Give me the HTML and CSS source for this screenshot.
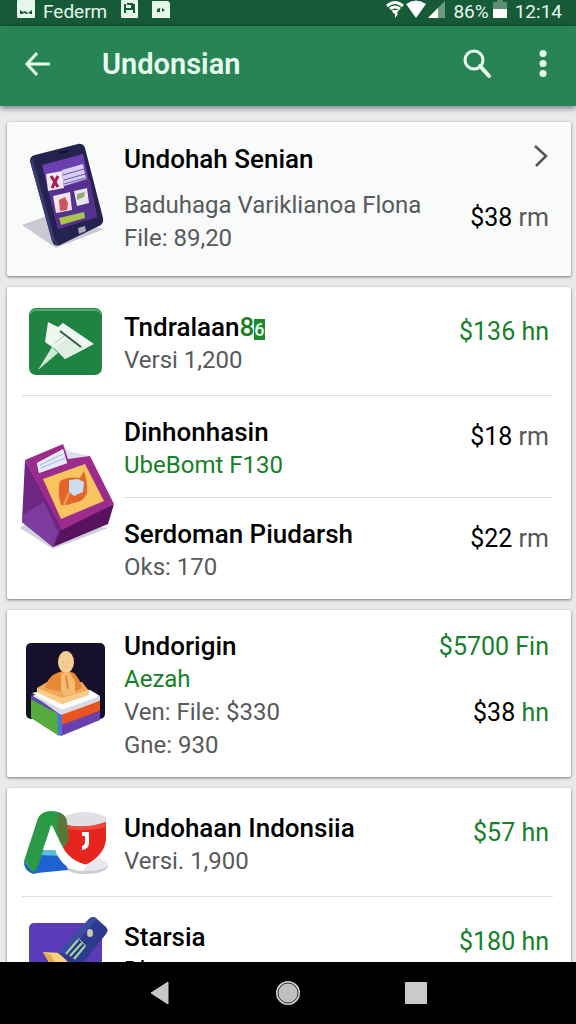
FILE: index.html
```html
<!DOCTYPE html>
<html lang="id">
<head>
  <meta charset="UTF-8">
  <meta name="viewport" content="width=device-width, initial-scale=1.0">
  <title>Undonsian</title>
  <link rel="stylesheet" href="styles.css">
</head>
<body>
  <div class="status-bar">
    <div class="status-left">
      <svg width="18" height="18" viewBox="0 0 18 18"><rect width="18" height="18" rx="1" fill="#e6f7ec"/><path d="M3 14v-4l3 2 2-1 3 2 4-3v4h-2l-1-1-2 1-3-1-2 1z" fill="#165a38"/></svg>
      <span class="carrier">Federm</span>
      <svg class="status-note" width="17" height="18" viewBox="0 0 17 18"><rect width="17" height="18" rx="1" fill="#e6f7ec"/><path d="M4 4v9M4 9h9M13 4v9M6 4h5v4" fill="none" stroke="#165a38" stroke-width="2"/></svg>
      <svg class="status-note" width="18" height="18" viewBox="0 0 18 18"><path d="M0 1h16l2 2v15H0z" fill="#e6f7ec"/><path d="M5 9l3-1v4H5zM10 8l3 2-3 2z" fill="#165a38"/></svg>
    </div>
    <div class="status-right">
      <svg width="18" height="18" viewBox="0 0 18 18"><path d="M1 6q8-7 16 0M4 9q5-4 10 0" fill="none" stroke="#fff" stroke-width="3"/><path d="M6 10h7l-2 3 1 1-3 4 0-4-2-1z" fill="#fff"/></svg>
      <svg width="20" height="18" viewBox="0 0 20 18"><path d="M0 4q10-7 20 0L10 18z" fill="#fff"/></svg>
      <svg width="17" height="18" viewBox="0 0 17 18"><path d="M17 1v17H0z" fill="#6d9c83"/><path d="M10 8v10H0z" fill="#fff"/></svg>
      <span class="battery-level">86%</span>
      <svg width="14" height="18" viewBox="0 0 14 18"><path d="M4 0h6v2h4v8H0V2h4z" fill="#5c8f74"/><path d="M0 9h14v9H0z" fill="#fff"/></svg>
      <span class="clock">12:14</span>
    </div>
  </div>

  <header class="app-bar">
    <button class="icon-button" type="button" aria-label="Back">
      <svg width="32" height="32" viewBox="0 0 32 32"><path d="M28 16H5M15 5L5 16l10 11" fill="none" stroke="#e9fff0" stroke-width="3"/></svg>
    </button>
    <h1 class="app-title">Undonsian</h1>
    <button class="icon-button" type="button" aria-label="Search">
      <svg width="32" height="32" viewBox="0 0 32 32"><circle cx="12" cy="12" r="9" fill="none" stroke="#e9fff0" stroke-width="3"/><path d="M18 18l9 10" stroke="#e9fff0" stroke-width="4" stroke-linecap="round"/></svg>
    </button>
    <button class="icon-button" type="button" aria-label="More options">
      <svg width="32" height="32" viewBox="0 0 32 32"><g fill="#e9fff0"><circle cx="16" cy="5.500" r="3.500"/><circle cx="16" cy="15.500" r="3.500"/><circle cx="16" cy="25.500" r="3.500"/></g></svg>
    </button>
  </header>

  <main class="list">
    <section class="card card-featured">
      <div class="row row-featured">
        <svg class="thumb" width="96" height="108" viewBox="0 0 96 108">
          <path d="M2 82l22-8 60 12-48 19z" fill="#c9c9d4"/>
          <path d="M10 18q0-5 5-6L58 1q5-1 7 4l18 70q1 6-4 8L40 102q-6 2-8-4z" fill="#25224f"/>
          <path d="M15 15q-2 2-1 6l21 76 3 4q-4 0-6-4L10 18z" fill="#3b3a73"/>
          <path d="M22 22l41-11 14 63-39 12z" fill="#6a3fb0"/>
          <path d="M29 48l41-12 7 38-39 12z" fill="#56308f"/>
          <path d="M40 10l8-2" stroke="#111029" stroke-width="2"/>
          <path d="M26 31l16-3 2 17-16 3z" fill="#f4eaf6"/>
          <path d="M31 33l7 11M38 33l-6 12" stroke="#a51c59" stroke-width="3"/>
          <path d="M42 27l21-6 3 15-22 7z" fill="#d9cef3"/>
          <path d="M43 32l21-6M44 37l21-6M44 41l21-6" stroke="#6a55b0"/>
          <path d="M33 53l17-4 2 18-16 3z" fill="#f7e3ea"/>
          <path d="M39 57l6-3 3 6-1 7-7 1z" fill="#cf5262"/>
          <path d="M54 48l13-3 2 15-12 3z" fill="#e6e7f0"/>
          <path d="M57 51l8-2-1 5-7 3z" fill="#9da66d"/>
          <path d="M39 75l25-6 1 6-24 7z" fill="#a9c54b"/>
          <path d="M58 85l7-2 1 5-7 3z" fill="#a8a9b8"/>
        </svg>
        <div class="info">
          <h2 class="name">Undohah Senian</h2>
          <p class="detail">Baduhaga Variklianoa Flona</p>
          <p class="detail">File: 89,20</p>
        </div>
        <div class="meta">
          <svg class="chevron" width="16" height="26" viewBox="0 0 16 26"><path d="M2 3l11 10L3 23" fill="none" stroke="#555" stroke-width="2.500"/></svg>
          <p class="price">$38 <span class="unit">rm</span></p>
        </div>
      </div>
    </section>

    <section class="card">
      <div class="row">
        <svg class="thumb" width="96" height="66" viewBox="0 0 96 66">
          <rect x="9" y="-3" width="73" height="67" rx="7" fill="#218343"/>
          <path d="M10 4q0-6 6-6h59q6 0 6 6-2-4-6-4H16q-4 0-6 4z" fill="#5aa673"/>
          <path d="M32 36l6 6-20 17z" fill="#cfe9d4"/>
          <path d="M28 11l10 5 5-4 31 21-29 15-10-10-10-7z" fill="#eef8f0"/>
          <path d="M36 36l10-8 20 9-21 11z" fill="#dcefe1"/>
          <path d="M40 20l21 16" stroke="#2f5b43" stroke-width="2"/>
          <path d="M35 32l9-7" stroke="#a9cbb3"/>
        </svg>
        <div class="info">
          <h2 class="name">Tndralaan<span class="green">8</span><span class="tag">6</span></h2>
          <p class="detail">Versi 1,200</p>
        </div>
        <div class="meta">
          <p class="price green">$136 hn</p>
        </div>
      </div>
      <div class="row row-group">
        <svg class="thumb" width="96" height="108" viewBox="0 0 96 108">
          <path d="M0 84l10-8 78 8-55 21z" fill="#cfd0dc"/>
          <path d="M43 0l5 7 22 5-20 16z" fill="#dcdff0"/>
          <path d="M5 16L2 78l31 25 10-18z" fill="#6f2584"/>
          <path d="M4 70l20-12 14 30-5 15L2 78z" fill="#7d3ba0"/>
          <path d="M42 84l52-24-6 20-55 23z" fill="#591260"/>
          <path fill-rule="evenodd" d="M5 16L43 0l5 15 22-3 24 48-52 26zM17 19l2 10 28-10-4-14z" fill="#9c2c8b"/>
          <path d="M17 19l26-13 4 13-28 10z" fill="#e3e9f7"/>
          <path d="M20 21l23-11M21 24l24-10" stroke="#a9b8d8"/>
          <path d="M23 35l42-15 19 37-43 18z" fill="#f9c45f"/>
          <path d="M40 37q8-5 20-3l4-7q4 12 3 22-3 9-14 10-7 3-12 2-4-12-1-24z" fill="#e2662c"/>
          <path d="M49 36l9-1 6 3-1 10-9 4-5-4z" fill="#cddcec"/>
          <path d="M49 49l-5 12" stroke="#f2a157" stroke-width="2"/>
        </svg>
        <div class="subrows">
          <div class="subrow">
            <div class="info">
              <h2 class="name">Dinhonhasin</h2>
              <p class="detail green">UbeBomt F130</p>
            </div>
            <div class="meta">
              <p class="price">$18 <span class="unit">rm</span></p>
            </div>
          </div>
          <div class="subrow">
            <div class="info">
              <h2 class="name">Serdoman Piudarsh</h2>
              <p class="detail">Oks: 170</p>
            </div>
            <div class="meta">
              <p class="price">$22 <span class="unit">rm</span></p>
            </div>
          </div>
        </div>
      </div>
    </section>

    <section class="card">
      <div class="row row-tall">
        <svg class="thumb" width="96" height="108" viewBox="0 0 96 108">
          <rect x="6" y="1" width="79" height="76" rx="5" fill="#17102a"/>
          <path d="M12 54l30 18 38-15-10-8-28-6z" fill="#f2f0f6"/>
          <path d="M11 57l30 16-2 21-28-18z" fill="#56ad3d"/>
          <path d="M11 53l31 18v3L11 57z" fill="#5b4bb5"/>
          <path d="M12 52l30 16 38-14v5L42 74z" fill="#d9d9e6"/>
          <path d="M12 51l30 16 38-13-10-6-28-4z" fill="#fff"/>
          <path d="M41 73l39-14v10L41 84z" fill="#e8541f"/>
          <path d="M41 83l39-14v9L41 94z" fill="#6a3fae"/>
          <path d="M37 71l5 2v21l-4-1z" fill="#4b77d0"/>
          <path d="M17 46l10-6h35l7 9-1 4-26 9-25-12z" fill="#edaa5c"/>
          <path d="M17 46l25 10 27-8-1 5-26 9-25-12z" fill="#f9cb87"/>
          <path d="M37 31q8-4 17 0 6 6 8 15l-13 6-24-6q3-12 12-15z" fill="#e98835"/>
          <path d="M41 31h9l5 9v12l-9 2-5-5z" fill="#f6bb73"/>
          <path d="M46 34l2 13" stroke="#d88a42" stroke-width="2"/>
          <ellipse cx="46" cy="20" rx="8" ry="11" fill="#f5ce94"/>
          <path d="M42 20h2M48 20h2M45 25h3" stroke="#dba868"/>
        </svg>
        <div class="info">
          <h2 class="name">Undorigin</h2>
          <p class="detail green">Aezah</p>
          <p class="detail">Ven: File: $330</p>
          <p class="detail">Gne: 930</p>
        </div>
        <div class="meta meta-spread">
          <p class="price green">$5700 Fin</p>
          <p class="price">$38 <span class="green">hn</span></p>
        </div>
      </div>
    </section>

    <section class="card">
      <div class="row">
        <svg class="thumb" width="96" height="66" viewBox="0 0 96 66">
          <ellipse cx="66" cy="54" rx="22" ry="8" fill="#cdced4"/>
          <ellipse cx="66" cy="52" rx="22" ry="7" fill="#e9e9ed"/>
          <path d="M43 5q22-10 43 0v10H43z" fill="#dfe0e6"/>
          <path d="M43 12q20 6 43-2v18q-2 16-21 25-22-8-27-23z" fill="#e5261f"/>
          <path d="M43 12q20 6 43-2v5q-20 6-43 1z" fill="#f0473d"/>
          <path d="M18 40h22l8 18-31 3z" fill="#1d62d2"/>
          <path d="M19 38h22l2 6-25-1z" fill="#5bbfd6"/>
          <path d="M4 49L18 6q4-7 13-7 11 0 15 7l3 20-6 11-12-24-13 42q-2 5-5 4z" fill="#2b9a46"/>
          <path d="M4 49l9 10q4-1 5-6v8l-5 1q-10-4-9-13z" fill="#1e6fa8"/>
          <path d="M38 1q7 1 9 7l2 21-8 3-4-14z" fill="#77602f" opacity=".6"/>
          <path d="M32 13l-9 24 13-2 3 3q8 18 26 19-20 3-29-17z" fill="#fff"/>
          <path d="M32 13l9 19q8 17 26 21l-4 6q-19 0-27-19z" fill="#fff"/>
          <path d="M62 20h7v11q0 6-7 7v-4q3-1 3-4v-6h-3z" fill="#fff"/>
        </svg>
        <div class="info">
          <h2 class="name">Undohaan Indonsiia</h2>
          <p class="detail">Versi. 1,900</p>
        </div>
        <div class="meta">
          <p class="price green">$57 hn</p>
        </div>
      </div>
      <div class="row">
        <svg class="thumb" width="96" height="66" viewBox="0 0 96 66">
          <rect x="9" y="2" width="73" height="68" rx="5" fill="#5a3cba"/>
          <path d="M23 31l17 1 12 14-16 8z" fill="#f7d27a"/>
          <path d="M23 31l8 3 7 14-5-1z" fill="#e6a94c"/>
          <path d="M69-2q4-4 8 0l9 8q3 3 0 7L58 48 38 32z" fill="#2e3a8c"/>
          <path d="M69-2q4-4 8 0l-31 36-8-2z" fill="#3d4ba3"/>
          <path d="M46 33l12-14M50 35l12-13M54 38l11-13" stroke="#a8d69d" stroke-width="2"/>
          <path d="M58 17l8 8" stroke="#a8d69d"/>
          <ellipse cx="70" cy="12" rx="3" ry="4" fill="#c9c7b4"/>
        </svg>
        <div class="info">
          <h2 class="name">Starsia</h2>
          <p class="detail dark">Dk:</p>
        </div>
        <div class="meta">
          <p class="price green">$180 hn</p>
        </div>
      </div>
    </section>
  </main>

  <nav class="nav-bar">
    <button class="icon-button" type="button" aria-label="Back">
      <svg width="32" height="32" viewBox="0 0 32 32"><path d="M7 16L24 5v22z" fill="#c6c6c8" stroke="#c6c6c8" stroke-linejoin="round"/></svg>
    </button>
    <button class="icon-button" type="button" aria-label="Home">
      <svg width="32" height="32" viewBox="0 0 32 32"><circle cx="16" cy="16" r="12" fill="#cfcfd1"/><circle cx="16" cy="16" r="10" fill="#c0c0c2" stroke="#333"/></svg>
    </button>
    <button class="icon-button" type="button" aria-label="Recent apps">
      <svg width="32" height="32" viewBox="0 0 32 32"><rect x="5" y="5" width="22" height="22" rx="1" fill="#cbc9cc"/></svg>
    </button>
  </nav>
</body>
</html>
```

FILE: styles.css
```css
* {
  box-sizing: border-box;
}
body {
  margin: 0;
  height: 100vh;
  display: flex;
  flex-direction: column;
  font-family: Roboto, "Liberation Sans", sans-serif;
  background-color: #e9eaec;
  color: #000;
}
h1, h2, p {
  margin: 0;
}
svg {
  display: block;
  flex: none;
}
.icon-button {
  padding: 0;
  border: 0;
  background: none;
  cursor: pointer;
}

/* Status bar */
.status-bar {
  flex: none;
  display: flex;
  justify-content: space-between;
  height: 26px;
  padding: 0 14px 0 17px;
  background-color: #165a38;
  color: #e6f7ec;
  font-size: 19px;
  line-height: 23px;
}
.status-left,
.status-right {
  display: flex;
  align-items: flex-start;
}
.carrier {
  margin-left: 8px;
}
.status-note {
  margin-left: 14px;
}
.status-right {
  gap: 2px;
}
.battery-level {
  margin: 0 2px 0 6px;
}
.clock {
  margin-left: 6px;
}

/* App bar */
.app-bar {
  flex: none;
  display: flex;
  align-items: center;
  gap: 33px;
  height: 80px;
  padding: 0 17px 4px 22px;
  background-color: #298455;
  box-shadow: 0 2px 6px rgba(0, 0, 0, 0.5);
  z-index: 1;
}
.app-title {
  flex: 1;
  padding-left: 15px;
  color: #e9fff0;
  font-size: 29px;
  font-weight: 600;
  line-height: 36px;
}

/* Cards */
.list {
  flex: 1;
  min-height: 0;
  display: flex;
  flex-direction: column;
  gap: 11px;
  padding: 16px 5px 0 7px;
  overflow-y: auto;
  scrollbar-width: none;
}
.card {
  flex: none;
  padding: 0 18px 0 15px;
  background-color: #fff;
  border-radius: 2px;
  box-shadow: 0 1px 3px rgba(0, 0, 0, 0.5);
}
.card-featured {
  background-color: #f9fafa;
}
.row {
  display: grid;
  grid-template-columns: 102px 1fr auto;
  align-items: start;
  padding: 24px 0 18px;
}
.row + .row {
  border-top: 1px solid #dcdde0;
}
.row-featured {
  padding: 21px 0;
}
.row-group {
  grid-template-columns: 102px 1fr;
  align-items: center;
  padding: 0;
}
.row-tall {
  padding: 20px 0 15px;
}
.row-tall .thumb {
  align-self: center;
}
.subrow {
  display: flex;
  justify-content: space-between;
  padding: 20px 0 15px;
}
.subrow + .subrow {
  border-top: 1px solid #dcdde0;
}
.thumb {
  margin-left: -2px;
  overflow: visible;
}

/* Text */
.info {
  white-space: nowrap;
}
.name {
  font-size: 26px;
  font-weight: 500;
  line-height: 33px;
}
.row-featured .name {
  margin-bottom: 13px;
}
.detail {
  color: #58595b;
  font-size: 24px;
  line-height: 33px;
}
.tag {
  background-color: #1d8a30;
  color: #e4ffe8;
  font-size: 18px;
  line-height: 18px;
}
.meta {
  display: flex;
  flex-direction: column;
  align-items: flex-end;
  padding: 4px 4px 0 0;
}
.row-featured .meta {
  gap: 32px;
  padding-top: 0;
}
.meta-spread {
  gap: 33px;
  padding-top: 0;
}
.price {
  font-size: 25px;
  line-height: 33px;
  white-space: nowrap;
}
.unit {
  color: #58595b;
}
.green {
  color: #178029;
}
.dark {
  color: #000;
}

/* Navigation bar */
.nav-bar {
  flex: none;
  display: flex;
  justify-content: center;
  align-items: center;
  gap: 96px;
  height: 62px;
  background-color: #000;
}
```
